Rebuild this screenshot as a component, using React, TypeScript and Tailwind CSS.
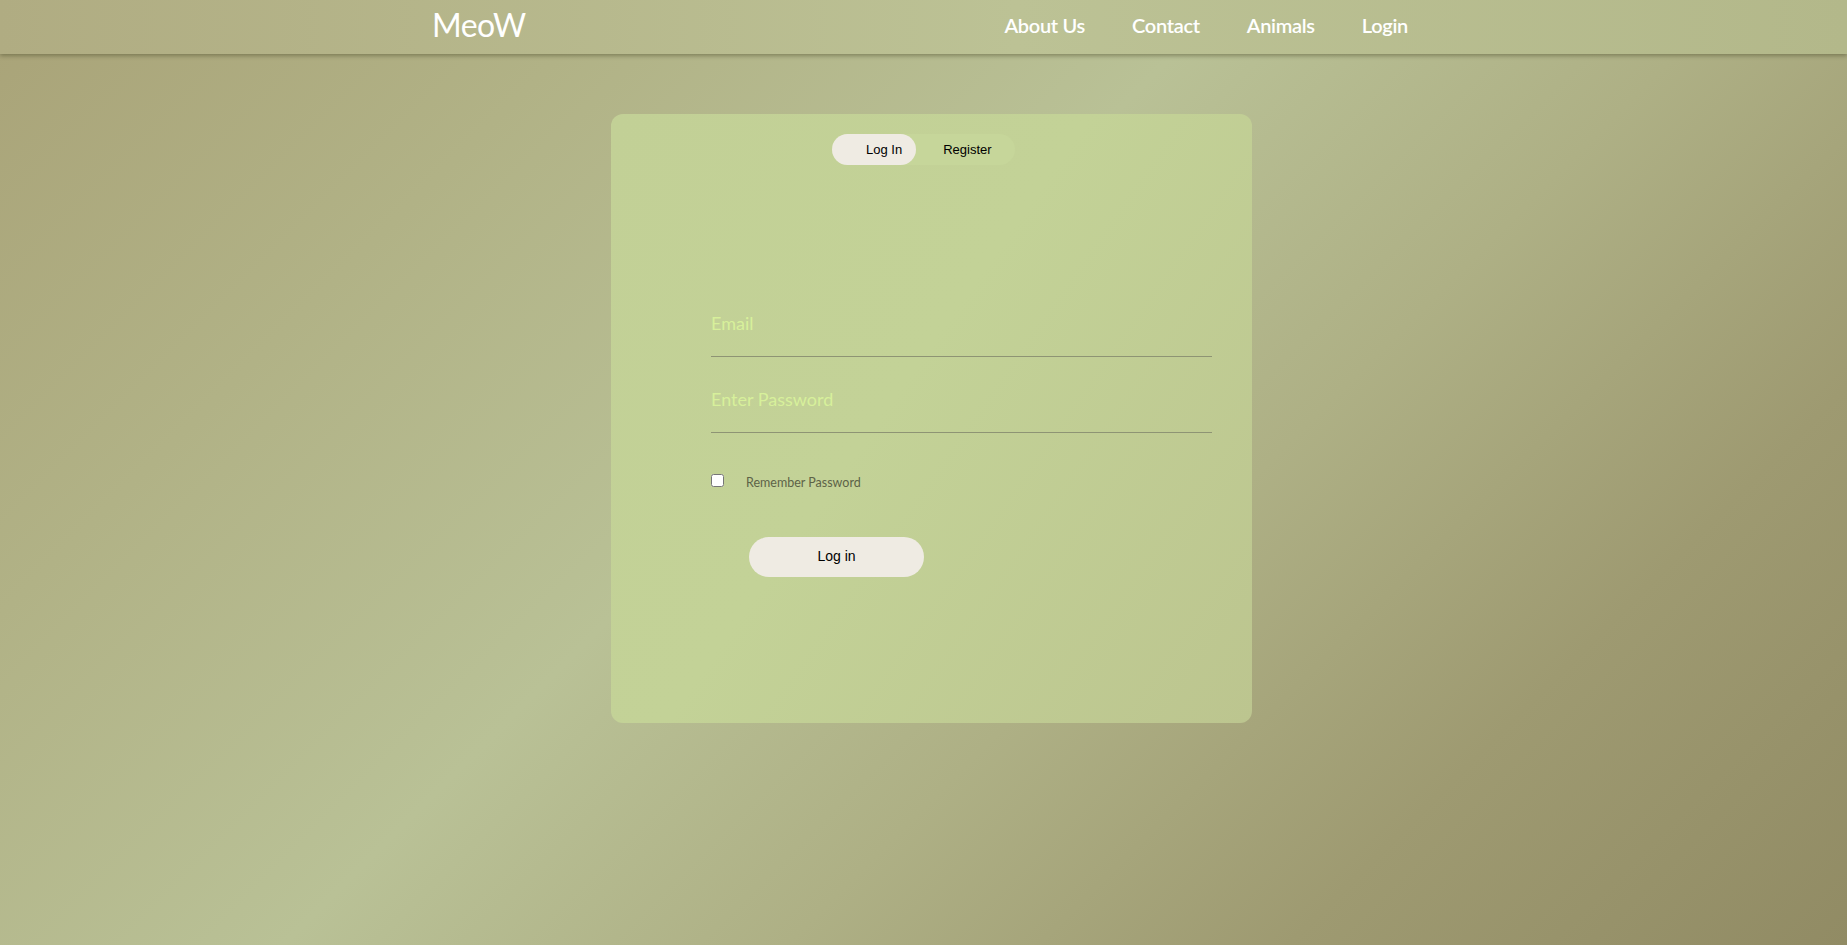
import React from "react";

export default function App() {
  return (
    <div
      className="relative w-full min-h-[945px] overflow-hidden bg-[linear-gradient(135deg,#a9a378_0%,#b1b286_22%,#b9c196_44%,#aeb085_62%,#9e9a71_80%,#918b64_100%)]"
      style={{ fontFamily: "Lato, 'Noto Sans', sans-serif" }}
    >
      <header className="relative z-10 flex h-[54px] justify-center pr-[7px] bg-[linear-gradient(90deg,#b0ac82_0%,#bcc295_55%,#b3b88a_100%)] shadow-[0_2px_4px_rgba(70,70,40,0.45)]">
        <div className="flex h-full w-[976px] items-center justify-between pb-[5px]">
          <div className="text-[32px] leading-none text-white tracking-[-0.5px]">MeoW</div>
          <nav className="flex items-center gap-[47px] text-[20px] font-semibold text-white tracking-[-0.3px]">
            <span>About Us</span>
            <span>Contact</span>
            <span>Animals</span>
            <span>Login</span>
          </nav>
        </div>
      </header>

      <main className="flex justify-center pl-[16px] pt-[60px]">
        <div className="h-[609px] w-[641px] rounded-[12px] bg-[linear-gradient(125deg,#c2d096_0%,#c3d297_45%,#bcc58f_100%)] pt-[20px]">
          <div className="flex justify-center pr-[16px]">
            <div
              className="relative h-[31px] w-[183px] rounded-full bg-[#c6d69a]"
              style={{ fontFamily: "'Liberation Sans', Arial, sans-serif" }}
            >
              <div className="absolute left-0 top-0 h-[31px] w-[84px] rounded-full bg-[#efebe3]" />
              <div className="relative flex h-full items-center gap-[41px] pl-[34px] text-[13px] text-black">
                <span>Log In</span>
                <span>Register</span>
              </div>
            </div>
          </div>

          <form className="ml-[100px] mr-[40px] mt-[144px]" onSubmit={(e) => e.preventDefault()}>
            <div className="border-b border-[#8e9474] pb-[19px]">
              <input
                type="email"
                placeholder="Email"
                className="block h-[28px] w-full bg-transparent text-[18px] text-[#4a4f36] outline-none placeholder:text-[#d7f09b]"
              />
            </div>
            <div className="mt-[28px] border-b border-[#8e9474] pb-[19px]">
              <input
                type="password"
                placeholder="Enter Password"
                className="block h-[28px] w-full bg-transparent text-[18px] text-[#4a4f36] outline-none placeholder:text-[#d7f09b]"
              />
            </div>
            <label className="mt-[36px] flex items-center">
              <input type="checkbox" className="m-0 h-[13px] w-[13px]" />
              <span className="ml-[22px] mt-[5px] text-[12.5px] text-[#5d6347]">Remember Password</span>
            </label>
            <button
              type="submit"
              className="ml-[38px] mt-[44px] h-[40px] w-[175px] rounded-full bg-[#efebe3] text-[14px] text-black"
              style={{ fontFamily: "'Liberation Sans', Arial, sans-serif" }}
            >
              Log in
            </button>
          </form>
        </div>
      </main>
    </div>
  );
}
